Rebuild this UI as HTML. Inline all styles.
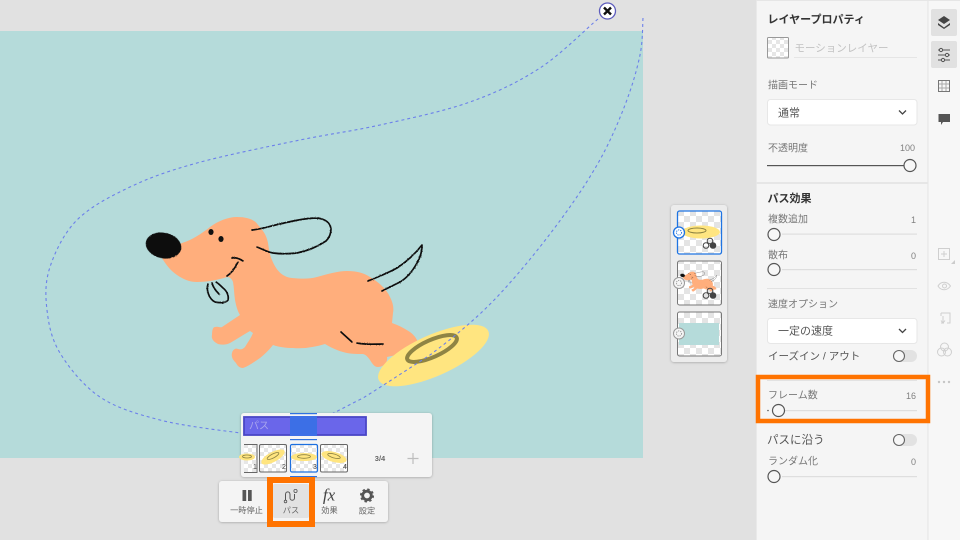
<!DOCTYPE html>
<html lang="ja">
<head>
<meta charset="utf-8">
<style>
html,body{margin:0;padding:0;width:960px;height:540px;overflow:hidden;background:#e1e1e1}
svg{display:block}
text{font-family:"Liberation Sans","Noto Sans CJK JP",sans-serif;dominant-baseline:central}
.lb{font-size:10px;fill:#777;transform:translateY(1px)}
.v{font-size:9px;fill:#808080;text-anchor:end}
.h{font-size:11px;font-weight:700;fill:#333;transform:translate(-.5px,1px)}
.d{font-size:11px;fill:#555;transform:translateY(1px)}
.tb{font-size:8.200px;fill:#666;text-anchor:middle;transform:translateY(.5px)}
.m{transform:translateY(.8px)}
</style>
</head>
<body>
<svg width="960" height="540" viewBox="0 0 960 540" xmlns="http://www.w3.org/2000/svg">
<defs>
<pattern id="ck" width="12" height="12" patternUnits="userSpaceOnUse">
<rect width="12" height="12" fill="#fff"/>
<rect width="6" height="6" fill="#e4e4e4"/>
<rect x="6" y="6" width="6" height="6" fill="#e4e4e4"/>
</pattern>
<pattern id="ck2" width="8" height="8" patternUnits="userSpaceOnUse">
<rect width="8" height="8" fill="#fff"/>
<rect width="4" height="4" fill="#e6e6e6"/>
<rect x="4" y="4" width="4" height="4" fill="#e6e6e6"/>
</pattern>
<filter id="sh" x="-10%" y="-10%" width="120%" height="125%">
<feDropShadow dx="0" dy="0.5" stdDeviation="1.2" flood-color="#000" flood-opacity=".28"/>
</filter>
<filter id="rough" x="-5%" y="-5%" width="110%" height="110%">
<feTurbulence type="fractalNoise" baseFrequency=".8" numOctaves="2" seed="3"/>
<feDisplacementMap in="SourceGraphic" scale="1.3"/>
</filter>
<g id="dog">
<path fill="#ffae7c" d="M162 258C170 250 176 246 182 243C192 240 201 234 210 227C218 221 228 217 237 217C248 217 255 220 258 225C265 232 267 238 268 243C269 250 270 256 272 260C276 270 282 277 292 278C302 279 310 279 317 277C328 274 338 271 347 271C357 271 364 273 370 277C380 283 387 290 390 297C393 303 394 308 393 313L392 323C398 325 404 328 410 332C414 335 416 338 417 340L420 350L387 357C388 362 384 367 378 367C374 367 372 363 370 360C367 356 366 355 363 354C356 354 349 354 343 352C336 350 330 347 325 344C315 347 304 349 293 348C286 348 279 347 273 345C269 350 265 354 260 358C254 362 249 366 243 368C239 368 237 365 236 363C233 360 231 357 232 353C233 349 236 348 238 349C241 350 243 349 245 347C248 342 251 338 253 333L250 331C243 335 237 339 230 343C226 345 222 345 218 344C214 342 211 339 212 335C212 330 213 327 215 327C218 326 220 328 222 327C228 323 234 319 240 315C237 310 236 305 235 300C234 293 234 287 233 282C232 279 230 277 227 277C218 280 207 282 197 282C189 282 183 279 177 275C171 271 166 265 162 258Z"/>
<g fill="none" stroke="#111" stroke-width="1.700" stroke-linecap="round" stroke-linejoin="round" filter="url(#rough)">
<path d="M252 230C262 229 270 226 280 224C292 221 305 218 317 218C325 219 330 222 331 229C331 234 329 238 326 241C317 247 307 251 297 253C288 254 280 254 273 253C267 252 262 249 257 247"/>
<path d="M368 281C378 277 388 273 397 268C406 262 415 254 422 245C422 252 420 258 417 263C412 272 407 278 400 282C394 285 388 288 382 291"/>
<path d="M341 332L352 342"/>
<path d="M357 343C366 345 375 344 383 344"/>
<path d="M232 258C236 257 240 259 243 261"/>
<path d="M238 262C235 268 232 273 227 276"/>
<path d="M208 284C206 290 209 299 215 302C220 303 226 303 228 300C229 296 227 291 223 288C220 285 218 283 216 282"/>
<path d="M212 283C213 287 216 291 219 294"/>
</g>
<ellipse cx="211" cy="232" rx="2.600" ry="3" fill="#111"/>
<ellipse cx="221" cy="239" rx="2.600" ry="3" fill="#111"/>
<ellipse cx="163.500" cy="245.500" rx="18" ry="12.800" transform="rotate(12 163.500 245.500)" fill="#0a0a0a" filter="url(#rough)"/>
</g>
</defs>

<rect width="960" height="540" fill="#e1e1e1"/>
<rect x="0" y="31" width="643" height="427" fill="#b5dbda"/>

<use href="#dog"/>
<ellipse cx="433.500" cy="355.500" rx="60" ry="20.500" transform="rotate(-24 433.500 355.500)" fill="#ffe580"/>
<ellipse cx="432" cy="348.500" rx="27" ry="8.500" transform="rotate(-24 432 348.500)" fill="none" stroke="#8f8444" stroke-width="4"/>

<g fill="none" stroke="#6c80ea" stroke-width="1.100" stroke-dasharray="3 3">
<path d="M598 19C588 27 561.300 54.200 540 68C518.700 81.800 496.700 92.500 470 102C443.300 111.500 408.300 118.700 380 125C351.700 131.300 330.500 133.700 300 140C269.500 146.300 225.300 155.200 197 163C168.700 170.800 150 177.500 130 187C110 196.500 90.300 206.700 77 220C63.700 233.300 55 252 50 267C45 282 45.300 295.700 47 310C48.700 324.300 51.200 338.500 60 353C68.800 367.500 83.300 385.800 100 397C116.700 408.200 137.200 414 160 420C182.800 426 224.200 430.800 241 433"/>
<path d="M643 18C642.500 24 643 40.500 640 55C637 69.500 632.200 86.300 625 105C617.800 123.700 609 144.200 597 165C585 185.800 569.700 208 553 230C536.300 252 517.500 275.200 497 297C476.500 318.800 452.300 338.200 430 355C407.700 369.300 381 387 363 398C345 407 335 412.500 322 419"/>
</g>
<circle cx="607.500" cy="11" r="8" fill="#fff" stroke="#5d5cbc" stroke-width="1.300"/>
<path d="M604 7.500L611 14.500M611 7.500L604 14.500" stroke="#111" stroke-width="2.400"/>

<!-- timeline -->
<rect x="241" y="413" width="191" height="64" rx="3" fill="#f4f4f4" filter="url(#sh)"/>
<rect x="244" y="417" width="122" height="18" fill="#6a66ea" stroke="#4a46c6" stroke-width="1.800"/>
<rect x="290" y="416" width="27" height="20" fill="#3c6fe6"/>
<rect x="290" y="413" width="27" height="1.200" fill="#2f73e0"/>
<rect x="290" y="439" width="27" height="1.200" fill="#2f73e0"/>
<rect x="290" y="476" width="27" height="1.200" fill="#2f73e0"/>
<text x="249" y="425.500" class="m" style="font-size:10px;fill:#a9a6ee">パス</text>

<g stroke="#666" stroke-width="1">
<path d="M244 444.500H257V472.500H244" fill="url(#ck2)"/>
<rect x="259.500" y="444.500" width="27" height="27.500" rx="1.500" fill="url(#ck2)"/>
<rect x="320.500" y="444.500" width="27" height="27.500" rx="1.500" fill="url(#ck2)"/>
</g>
<rect x="290.500" y="444.500" width="27" height="27.500" rx="1.500" fill="url(#ck2)" stroke="#1d70e0" stroke-width="1.200"/>
<ellipse cx="247" cy="457" rx="8" ry="3.500" fill="#ffe580"/>
<ellipse cx="247" cy="456.500" rx="4.500" ry="1.500" fill="none" stroke="#8d8343" stroke-width=".8"/>
<ellipse cx="273" cy="457" rx="13" ry="5" transform="rotate(-28 273 457)" fill="#ffe580"/>
<ellipse cx="273" cy="456" rx="6.500" ry="2" transform="rotate(-28 273 456)" fill="none" stroke="#8d8343" stroke-width=".8"/>
<ellipse cx="304" cy="457" rx="13" ry="4" fill="#ffe580"/>
<ellipse cx="304" cy="456.500" rx="6.500" ry="1.800" fill="none" stroke="#8d8343" stroke-width=".8"/>
<ellipse cx="334" cy="457" rx="13" ry="5" transform="rotate(16 334 457)" fill="#ffe580"/>
<ellipse cx="334" cy="456" rx="6.500" ry="1.900" transform="rotate(16 334 456)" fill="none" stroke="#8d8343" stroke-width=".8"/>
<g style="font-size:7px" fill="#444">
<text x="253" y="467.500">1</text><text x="282" y="467.500">2</text><text x="313" y="467.500">3</text><text x="343" y="467.500">4</text>
</g>
<text x="380" y="458.500" text-anchor="middle" style="font-size:7.500px;font-weight:700" fill="#666">3/4</text>
<path d="M413 453V464M407.500 458.500H418.500" stroke="#bdbdbd" stroke-width="1.200"/>

<!-- bottom toolbar -->
<rect x="219" y="481" width="169" height="41" rx="3" fill="#f4f4f4" filter="url(#sh)"/>
<rect x="273" y="484" width="36" height="34" rx="2" fill="#e2e2e2"/>
<rect x="242.500" y="490" width="3.700" height="11" fill="#555"/>
<rect x="248" y="490" width="3.700" height="11" fill="#555"/>
<text x="246.500" y="510" class="tb">一時停止</text>
<path d="M285.500 500V494.500C285.500 491 290 491 290 494.500V498C290 501 294.500 501 294.500 498V494" fill="none" stroke="#555" stroke-width="1"/>
<circle cx="285.500" cy="501.500" r="1.300" fill="none" stroke="#555" stroke-width=".8"/>
<circle cx="295.500" cy="491" r="1.600" fill="none" stroke="#555" stroke-width=".8"/>
<text x="291" y="510" class="tb">パス</text>
<text x="329" y="495" text-anchor="middle" style="font-family:'Liberation Serif',serif;font-style:italic;font-size:17px" fill="#444">fx</text>
<text x="329.500" y="510" class="tb">効果</text>
<circle cx="367" cy="495.500" r="4.300" fill="none" stroke="#555" stroke-width="2.800"/>
<circle cx="367" cy="495.500" r="6.300" fill="none" stroke="#555" stroke-width="1.500" stroke-dasharray="2.500 2.450"/>
<text x="367" y="510.500" class="tb">設定</text>
<rect x="270" y="480" width="42" height="44" fill="none" stroke="#ff7300" stroke-width="6"/>

<!-- layer panel -->
<rect x="671" y="205" width="56" height="157" rx="3" fill="#ececec" filter="url(#sh)"/>
<rect x="677.500" y="211" width="44" height="43" rx="2" fill="url(#ck)" stroke="#1f74e2" stroke-width="1.300"/>
<ellipse cx="701" cy="232" rx="19" ry="6.500" fill="#ffe580"/>
<ellipse cx="697" cy="230.500" rx="9" ry="2.500" fill="none" stroke="#8d8343" stroke-width="1"/>
<rect x="677.500" y="261" width="44" height="44" rx="2" fill="url(#ck)" stroke="#777" stroke-width="1"/>
<use href="#dog" transform="translate(661 243) scale(.132)"/>
<rect x="677.500" y="312" width="44" height="44" rx="2" fill="url(#ck)" stroke="#777" stroke-width="1"/>
<rect x="679" y="323" width="40" height="22" fill="#b5dbda"/>
<g fill="none" stroke="#444" stroke-width="1">
<circle cx="706" cy="245.500" r="2.800"/><circle cx="710" cy="241" r="2.800"/><circle cx="713" cy="245.500" r="2.800" fill="#444"/>
<circle cx="706" cy="295.500" r="2.800"/><circle cx="710" cy="291" r="2.800"/><circle cx="713" cy="295.500" r="2.800" fill="#444"/>
</g>
<circle cx="679" cy="232.500" r="5.500" fill="#fff" stroke="#1f74e2" stroke-width="1.300"/>
<circle cx="679" cy="232.500" r="2.600" fill="none" stroke="#1f74e2" stroke-width="1" stroke-dasharray="1.200 1"/>
<circle cx="679" cy="283" r="5.500" fill="#f5f5f5" stroke="#999" stroke-width="1"/>
<circle cx="679" cy="283" r="2.600" fill="none" stroke="#999" stroke-width="1" stroke-dasharray="1.200 1"/>
<circle cx="679" cy="333.500" r="5.500" fill="#f5f5f5" stroke="#999" stroke-width="1"/>
<circle cx="679" cy="333.500" r="2.600" fill="none" stroke="#999" stroke-width="1" stroke-dasharray="1.200 1"/>

<!-- right panel -->
<rect x="756" y="0" width="172" height="540" fill="#f5f5f5"/>
<rect x="928" y="0" width="32" height="540" fill="#f7f7f7"/>
<rect x="927.500" y="0" width="1" height="540" fill="#e4e4e4"/>
<rect x="756" y="0" width="1" height="540" fill="#e9e9e9"/>
<rect x="756" y="0" width="204" height="1" fill="#e6e6e6"/>

<text x="768" y="19" class="h">レイヤープロパティ</text>
<rect x="767.500" y="37.500" width="21" height="20.500" rx="1" fill="url(#ck2)" stroke="#999"/>
<text x="794.500" y="47.500" class="m" style="font-size:10.500px;fill:#c2c2c2">モーションレイヤー</text>
<rect x="794" y="57" width="123" height="1" fill="#e5e5e5"/>

<text x="768" y="85" class="lb">描画モード</text>
<rect x="767.500" y="99.500" width="149.500" height="25.500" rx="3" fill="#fff" stroke="#e7e7e7"/>
<text x="778" y="112.500" class="d">通常</text>
<path d="M899 110.500L902.500 114L906 110.500" fill="none" stroke="#444" stroke-width="1.300"/>

<text x="768" y="148" class="lb">不透明度</text>
<text x="915" y="148" class="v">100</text>
<rect x="767" y="165" width="137" height="1.200" fill="#555"/>
<circle cx="910" cy="165.500" r="6" fill="#f7f7f7" stroke="#555" stroke-width="1.200"/>

<rect x="756" y="182" width="172" height="2" fill="#e6e6e6"/>
<text x="768" y="198" class="h">パス効果</text>

<text x="768" y="219" class="lb">複数追加</text>
<text x="916" y="220" class="v">1</text>
<rect x="782" y="233.500" width="135" height="1.200" fill="#dedede"/>
<circle cx="774" cy="234.500" r="6" fill="#f7f7f7" stroke="#555" stroke-width="1.200"/>

<text x="768" y="255" class="lb">散布</text>
<text x="916" y="256" class="v">0</text>
<rect x="782" y="269" width="135" height="1.200" fill="#dedede"/>
<circle cx="774" cy="269.500" r="6" fill="#f7f7f7" stroke="#555" stroke-width="1.200"/>

<rect x="767" y="288" width="150" height="1" fill="#e2e2e2"/>
<text x="768" y="304" class="lb">速度オプション</text>
<rect x="767.500" y="318.500" width="149.500" height="25" rx="3" fill="#fff" stroke="#e7e7e7"/>
<text x="778" y="330.500" class="d">一定の速度</text>
<path d="M899 329L902.500 332.500L906 329" fill="none" stroke="#444" stroke-width="1.300"/>

<text x="768" y="355.500" class="d" style="font-size:10.500px">イーズイン / アウト</text>
<rect x="893" y="350" width="24" height="12" rx="6" fill="#e2e2e2"/>
<circle cx="899" cy="356" r="5.500" fill="#f7f7f7" stroke="#666" stroke-width="1.100"/>

<rect x="767" y="380" width="150" height="1" fill="#e2e2e2"/>
<text x="768" y="395" class="lb">フレーム数</text>
<text x="916" y="396" class="v">16</text>
<circle cx="768" cy="410.500" r=".8" fill="#555"/>
<rect x="785" y="410" width="132" height="1.200" fill="#dedede"/>
<circle cx="778.500" cy="410.500" r="6" fill="#f7f7f7" stroke="#555" stroke-width="1.200"/>
<rect x="758" y="377" width="170" height="44" fill="none" stroke="#ff7300" stroke-width="4.500"/>

<text x="767" y="439.500" class="d" style="font-size:11.500px">パスに沿う</text>
<rect x="893" y="434" width="24" height="12" rx="6" fill="#e2e2e2"/>
<circle cx="899" cy="440" r="5.500" fill="#f7f7f7" stroke="#666" stroke-width="1.100"/>

<text x="768" y="461" class="lb">ランダム化</text>
<text x="916" y="462" class="v">0</text>
<rect x="782" y="476" width="135" height="1.200" fill="#dedede"/>
<circle cx="774" cy="476.500" r="6" fill="#f7f7f7" stroke="#555" stroke-width="1.200"/>

<!-- right icons -->
<rect x="931" y="9" width="26" height="27" rx="2" fill="#e1e1e1"/>
<rect x="931" y="41" width="26" height="27" rx="2" fill="#e1e1e1"/>
<path d="M944 16L950 20L944 24L938 20Z" fill="#444"/>
<path d="M938 23L944 27.500L950 23L950 25L944 29L938 25Z" fill="#444"/>
<g stroke="#555" stroke-width="1" fill="#e1e1e1">
<path d="M938 50H950M938 55H950M938 60H950"/>
<circle cx="941" cy="50" r="1.600"/><circle cx="947" cy="55" r="1.600"/><circle cx="943" cy="60" r="1.600"/>
</g>
<g fill="none" stroke="#777" stroke-width="1">
<rect x="938.500" y="80.500" width="11" height="11"/>
<path d="M942 81V91M946 81V91M939 84H949M939 88H949" stroke="#aaa"/>
</g>
<path d="M938.500 114H950V122H943L941 125V122H938.500Z" fill="#555"/>
<g fill="none" stroke="#cfcfcf" stroke-width="1">
<rect x="938.500" y="248.500" width="11" height="11"/>
<path d="M944 251V257M941 254H947"/>
<path d="M938 286C941 281 947 281 950.500 286C947 291 941 291 938 286Z"/>
<circle cx="944.500" cy="286" r="2"/>
<path d="M941 313H950V323H947M941 313V316M941 323H944M943 316V323M941 320.500L943 323L945 320.500"/>
<circle cx="944.500" cy="347" r="4"/><circle cx="941.500" cy="352" r="4"/><circle cx="947.500" cy="352" r="4"/>
</g>
<path d="M951 264L955 260V264Z" fill="#ccc"/>
<g fill="#c6c6c6"><circle cx="939" cy="382" r="1.200"/><circle cx="944" cy="382" r="1.200"/><circle cx="949" cy="382" r="1.200"/></g>
</svg>
</body>
</html>
